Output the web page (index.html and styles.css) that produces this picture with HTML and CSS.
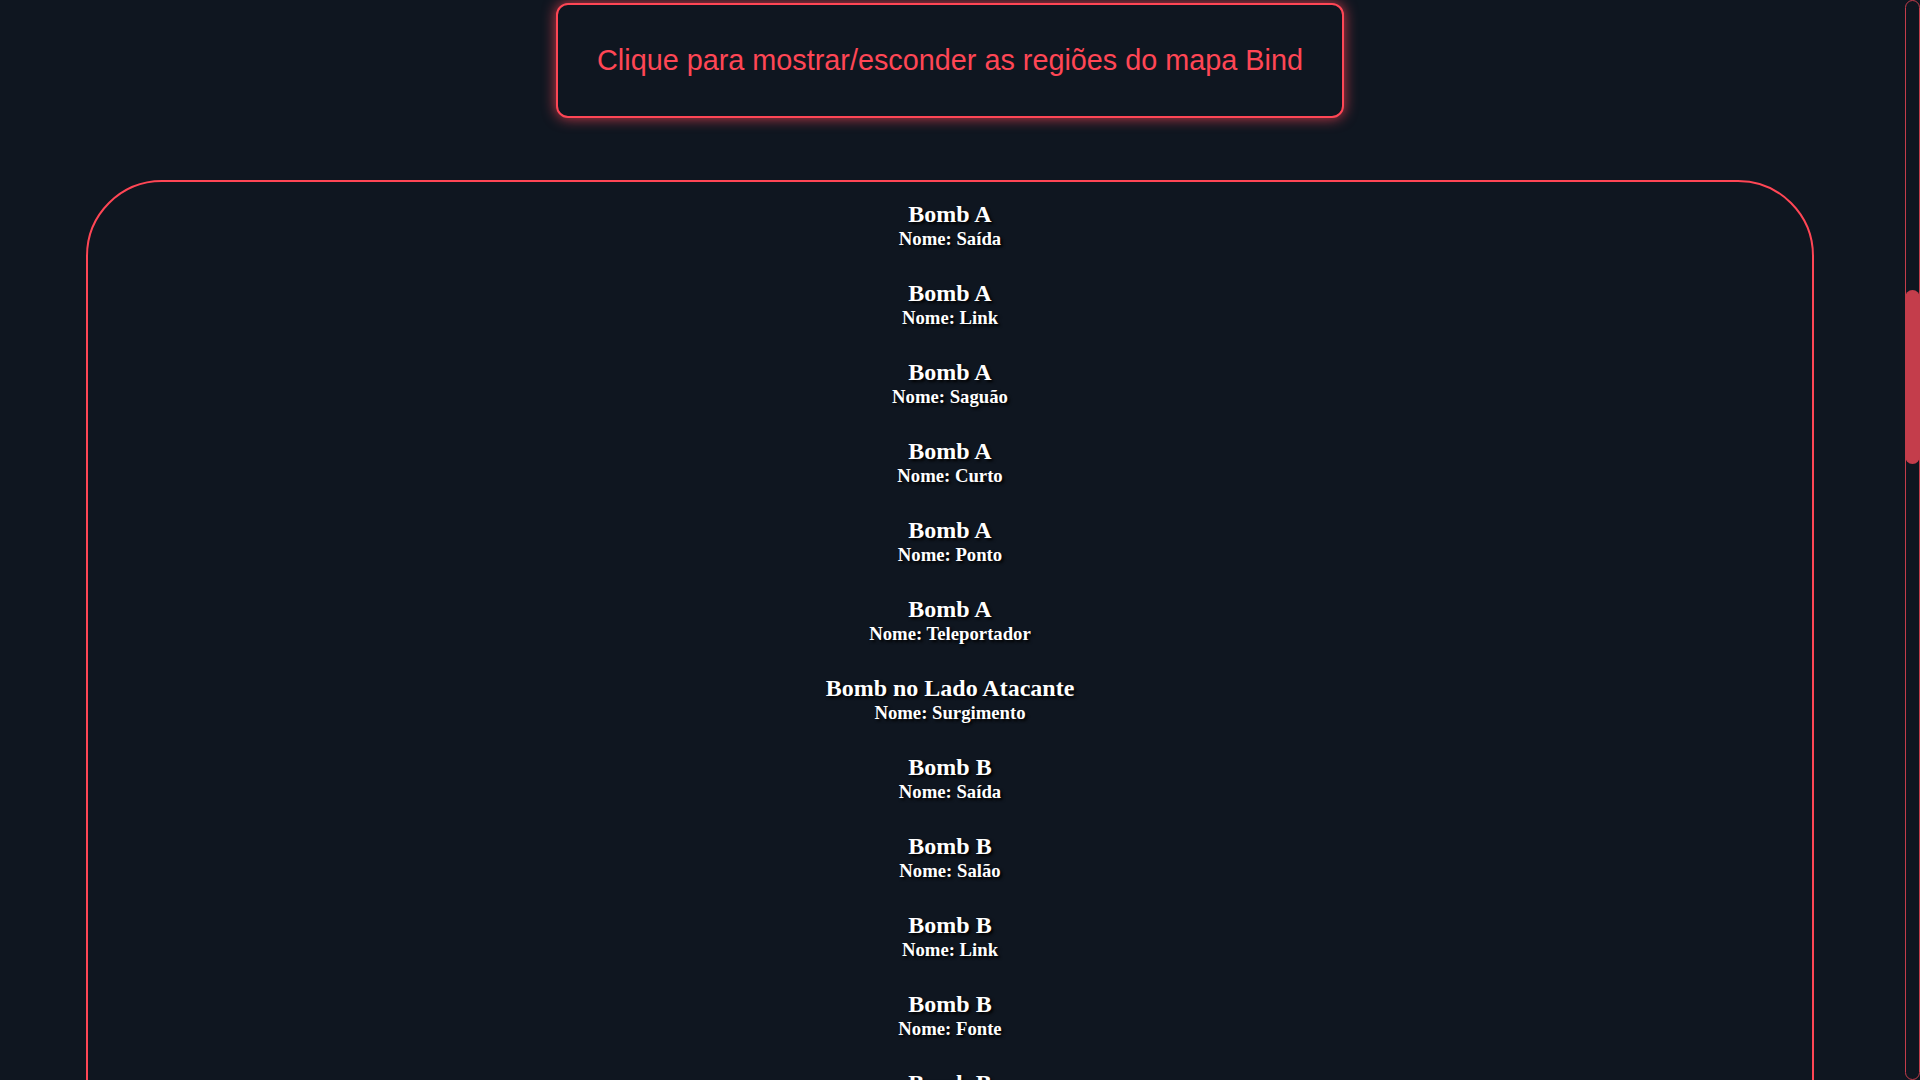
FILE: index.html
```html
<!DOCTYPE html>
<html lang="pt-BR">
<head>
<meta charset="utf-8">
<title>Regiões do mapa Bind</title>
<link rel="stylesheet" href="styles.css">
</head>
<body>
<div class="page">
  <div class="toggle-wrap">
    <button class="toggle">Clique para mostrar/esconder as regiões do mapa Bind</button>
  </div>
  <section class="regions">
    <div class="region"><h2>Bomb A</h2><h3>Nome: Saída</h3></div>
    <div class="region"><h2>Bomb A</h2><h3>Nome: Link</h3></div>
    <div class="region"><h2>Bomb A</h2><h3>Nome: Saguão</h3></div>
    <div class="region"><h2>Bomb A</h2><h3>Nome: Curto</h3></div>
    <div class="region"><h2>Bomb A</h2><h3>Nome: Ponto</h3></div>
    <div class="region"><h2>Bomb A</h2><h3>Nome: Teleportador</h3></div>
    <div class="region"><h2>Bomb no Lado Atacante</h2><h3>Nome: Surgimento</h3></div>
    <div class="region"><h2>Bomb B</h2><h3>Nome: Saída</h3></div>
    <div class="region"><h2>Bomb B</h2><h3>Nome: Salão</h3></div>
    <div class="region"><h2>Bomb B</h2><h3>Nome: Link</h3></div>
    <div class="region"><h2>Bomb B</h2><h3>Nome: Fonte</h3></div>
    <div class="region"><h2>Bomb B</h2><h3>Nome: Janela</h3></div>
  </section>
</div>
<div class="scrollbar"><div class="thumb"></div></div>
</body>
</html>
```
FILE: styles.css
```css
html, body {
  margin: 0;
  padding: 0;
  height: 100%;
  overflow: hidden;
  background: #0f1620;
}
.page {
  width: 1900px;
  display: flex;
  flex-direction: column;
  align-items: center;
}
.toggle-wrap {
  padding-top: 3px;
}
.toggle {
  display: block;
  width: 788px;
  height: 115px;
  padding: 0;
  background: #0f1620;
  border: 2px solid #ff4655;
  border-radius: 12px;
  box-shadow: 0 0 14px rgba(255, 70, 85, 0.8);
  color: #ff4655;
  font-family: "Liberation Sans", Arial, sans-serif;
  font-size: 28.8px;
  cursor: pointer;
}
.regions {
  box-sizing: border-box;
  width: 1728px;
  margin-top: 62px;
  height: 1200px;
  border: 2px solid #ff4655;
  border-radius: 76px;
  padding-top: 19px;
  display: flex;
  flex-direction: column;
  align-items: center;
  gap: 30px;
}
.region {
  display: flex;
  flex-direction: column;
  align-items: center;
  color: #ffffff;
  font-family: "Liberation Serif", "Times New Roman", serif;
  text-shadow: 2px 2px 3px #000;
}
.region h2 {
  margin: 0;
  font-size: 24px;
  font-weight: bold;
}
.region h3 {
  margin: 0;
  font-size: 18.72px;
  font-weight: bold;
}
.scrollbar {
  position: fixed;
  top: 0;
  right: 0;
  width: 15px;
  height: 1080px;
  box-sizing: border-box;
  border: 1px solid #c43d4b;
  border-radius: 8px;
}
.thumb {
  position: absolute;
  left: -1px;
  right: -1px;
  top: 289px;
  height: 174px;
  background: #c43d4b;
  border-radius: 8px;
}
```
